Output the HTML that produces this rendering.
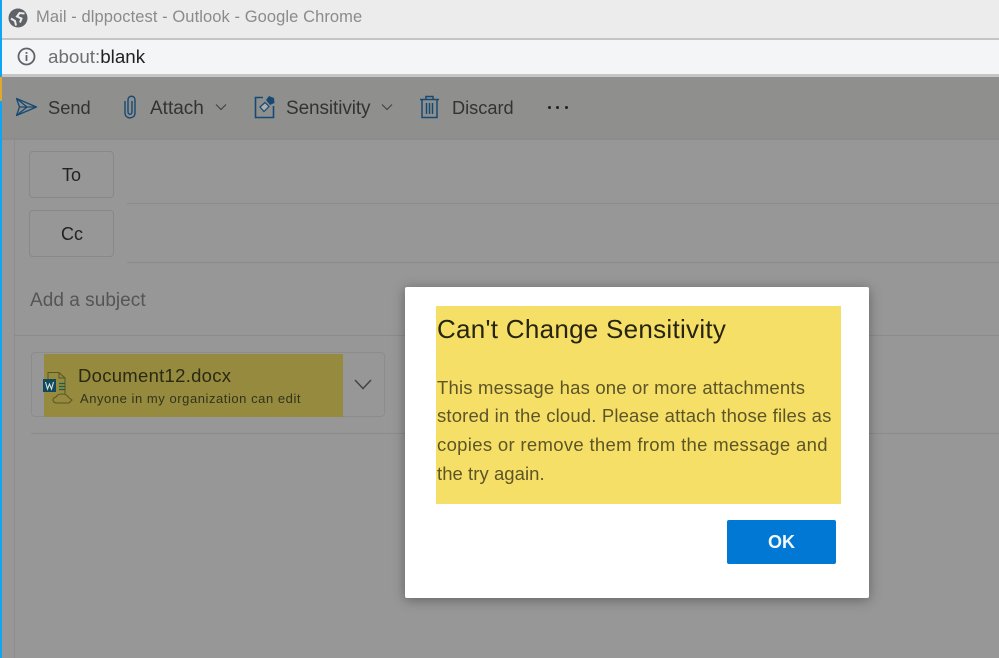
<!DOCTYPE html>
<html><head><meta charset="utf-8"><style>
html,body{margin:0;padding:0}
body{width:999px;height:658px;position:relative;overflow:hidden;background:#979797;font-family:"Liberation Sans",sans-serif}
.a{position:absolute}
.t{position:absolute;white-space:nowrap;line-height:1}
</style></head><body>
<div class="a" style="left:0;top:0;width:999px;height:38px;background:#ececec"></div>
<div class="a" style="left:0;top:38px;width:999px;height:2px;background:#c4c4c4"></div>
<div class="a" style="left:0;top:40px;width:999px;height:34px;background:#f4f5f7"></div>
<div class="a" style="left:0;top:74px;width:999px;height:3px;background:#c6c6c6"></div>
<div class="a" style="left:0;top:77px;width:999px;height:61px;background:#8f8f8e"></div>
<div class="a" style="left:0;top:138px;width:999px;height:2px;background:#8c8c8c"></div>
<div class="a" style="left:14px;top:140px;width:1px;height:518px;background:#8d8d8d"></div>
<div class="a" style="left:0;top:0;width:2px;height:658px;background:#0ea5f5"></div>
<div class="a" style="left:0;top:77px;width:2px;height:24px;background:#e0a82e"></div>

<svg class="a" style="left:8px;top:8px" width="20" height="20" viewBox="0 0 20 20"><circle cx="10" cy="10" r="9.500" fill="#5f6368"/><path d="M16.500 5.500 L11.500 5 L9 8.500 L13.500 10.500 L12 14.500 M3 10.500 L7 13 L8 17.500" fill="none" stroke="#ececec" stroke-width="2"/></svg>
<div class="t" style="left:36px;top:9px;font-size:16.500px;color:#8b8b8b;letter-spacing:.08px">Mail - dlppoctest - Outlook - Google Chrome</div>

<svg class="a" style="left:16px;top:46px" width="21" height="21" viewBox="0 0 21 21"><circle cx="10.500" cy="10.500" r="8" fill="none" stroke="#5f6368" stroke-width="1.800"/><rect x="9.600" y="9" width="1.800" height="6" fill="#5f6368"/><rect x="9.600" y="6" width="1.800" height="1.800" fill="#5f6368"/></svg>
<div class="t" style="left:48px;top:48px;font-size:18.800px;color:#6f6f6f">about:<span style="color:#222">blank</span></div>

<svg class="a" style="left:15px;top:97px" width="23" height="20" viewBox="0 0 23 20"><path d="M1.500 1.500 L21.500 10 L1.500 18.500 L4.500 10 Z M4.500 10 H21.500 M1.500 1.500 L12 10 L1.500 18.500" fill="none" stroke="#174a73" stroke-width="1.300" stroke-linejoin="round"/></svg>
<div class="t" style="left:48px;top:99px;font-size:18.300px;color:#333">Send</div>

<svg class="a" style="left:122px;top:95px" width="15" height="25" viewBox="0 0 15 25"><path d="M3 6 V18 C3 24.500 13 24.500 13 18 V5 C13 0 6 0 6 5 V17 C6 20 10 20 10 17 V6" fill="none" stroke="#174a73" stroke-width="1.400"/></svg>
<div class="t" style="left:150px;top:99px;font-size:19px;color:#333">Attach</div>
<svg class="a" style="left:215px;top:103px" width="12" height="8" viewBox="0 0 12 8"><path d="M1 1.500 L6 6.500 L11 1.500" fill="none" stroke="#444" stroke-width="1.200"/></svg>

<svg class="a" style="left:254px;top:95px" width="22" height="25" viewBox="0 0 22 25"><path d="M9 2.500 H1.500 V22.500 H19.500 V11" fill="none" stroke="#174a73" stroke-width="1.600"/><path d="M6 12 L11 7.500 L15 11.500 L10 16.500 Z" fill="#a8aeb2" stroke="#174a73" stroke-width="1.200"/><path d="M12 5 L15 1 L20 3 L20.500 8 L16 10 Z" fill="#174a73"/></svg>
<div class="t" style="left:286px;top:99px;font-size:19px;color:#333;letter-spacing:-.1px">Sensitivity</div>
<svg class="a" style="left:381px;top:103px" width="12" height="8" viewBox="0 0 12 8"><path d="M1 1.500 L6 6.500 L11 1.500" fill="none" stroke="#444" stroke-width="1.200"/></svg>

<svg class="a" style="left:419px;top:95px" width="21" height="24" viewBox="0 0 21 24"><path d="M1 4.500 H20 M7 4 V1.500 H14 V4 M3 4.500 V22.500 H18 V4.500 M7.500 8 V19 M10.500 8 V19 M13.500 8 V19" fill="none" stroke="#174a73" stroke-width="1.500"/></svg>
<div class="t" style="left:452px;top:99px;font-size:18.200px;color:#333">Discard</div>
<div class="a" style="left:548px;top:106px;width:3px;height:3px;background:#222;border-radius:50%"></div>
<div class="a" style="left:556px;top:106px;width:3px;height:3px;background:#222;border-radius:50%"></div>
<div class="a" style="left:565px;top:106px;width:3px;height:3px;background:#222;border-radius:50%"></div>

<div class="a" style="left:29px;top:151px;width:83px;height:45px;border:1px solid #888;border-radius:4px"></div>
<div class="t" style="left:62px;top:166px;font-size:18px;color:#222">To</div>
<div class="a" style="left:127px;top:203px;width:872px;height:1px;background:#8b8b8b"></div>
<div class="a" style="left:29px;top:210px;width:83px;height:45px;border:1px solid #888;border-radius:4px"></div>
<div class="t" style="left:61px;top:225px;font-size:18px;color:#222">Cc</div>
<div class="a" style="left:127px;top:262px;width:872px;height:1px;background:#8b8b8b"></div>
<div class="t" style="left:30px;top:291px;font-size:19px;color:#555;letter-spacing:.04px">Add a subject</div>
<div class="a" style="left:15px;top:335px;width:984px;height:1px;background:#8b8b8b"></div>

<div class="a" style="left:31px;top:352px;width:352px;height:63px;border:1px solid #8c8c8c;border-radius:4px"></div>
<div class="a" style="left:44px;top:354px;width:299px;height:63px;background:#958a3e"></div>
<svg class="a" style="left:43px;top:370px" width="32" height="36" viewBox="0 0 32 36"><path d="M5 9 V2.500 H16 L22 8 V24 M16 2.500 V8 H22" fill="none" stroke="#5a5524" stroke-width="1"/><rect x="0" y="9" width="13" height="13" fill="#0f4a5c"/><path d="M2.500 12 L4.500 19 L6.500 14 L8.500 19 L10.500 12" fill="none" stroke="#ddd" stroke-width="1.100"/><path d="M16 13.500 H22 M16 16.500 H22 M16 19.500 H22" stroke="#14614f" stroke-width="1.300"/><path d="M13 33 C9 32 9 28 13 27 C15 23 23 23 25 27 L29 30 L26 33 Z" fill="none" stroke="#5a5524" stroke-width="1"/></svg>
<div class="t" style="left:78px;top:367px;font-size:18.500px;color:#2a2a12;letter-spacing:.28px">Document12.docx</div>
<div class="t" style="left:80px;top:392px;font-size:13px;color:#33331a;letter-spacing:.55px">Anyone in my organization can edit</div>
<svg class="a" style="left:354px;top:379px" width="18" height="11" viewBox="0 0 18 11"><path d="M1 1 L9 9.500 L17 1" fill="none" stroke="#444" stroke-width="1.500"/></svg>
<div class="a" style="left:31px;top:433px;width:968px;height:1px;background:#8b8b8b"></div>

<div class="a" style="left:405px;top:287px;width:464px;height:311px;background:#fff;border-radius:2px;box-shadow:0 2px 12px rgba(0,0,0,.35)"></div>
<div class="a" style="left:436px;top:306px;width:405px;height:198px;background:#f6df67"></div>
<div class="t" style="left:437px;top:316px;font-size:26px;color:#26250f;letter-spacing:.28px">Can't Change Sensitivity</div>
<div class="t" style="left:437px;top:379px;font-size:18.500px;color:#5c5527;letter-spacing:.18px">This message has one or more attachments</div>
<div class="t" style="left:437px;top:407px;font-size:18.500px;color:#5c5527;letter-spacing:.16px">stored in the cloud. Please attach those files as</div>
<div class="t" style="left:437px;top:436px;font-size:18.500px;color:#5c5527;letter-spacing:.32px">copies or remove them from the message and</div>
<div class="t" style="left:437px;top:465px;font-size:18.500px;color:#5c5527;letter-spacing:.05px">the try again.</div>
<div class="a" style="left:727px;top:520px;width:109px;height:44px;background:#0078d4;border-radius:2px"></div>
<div class="t" style="left:727px;top:533px;width:109px;text-align:center;font-size:18px;font-weight:bold;color:#f2f7fc">OK</div>
</body></html>
